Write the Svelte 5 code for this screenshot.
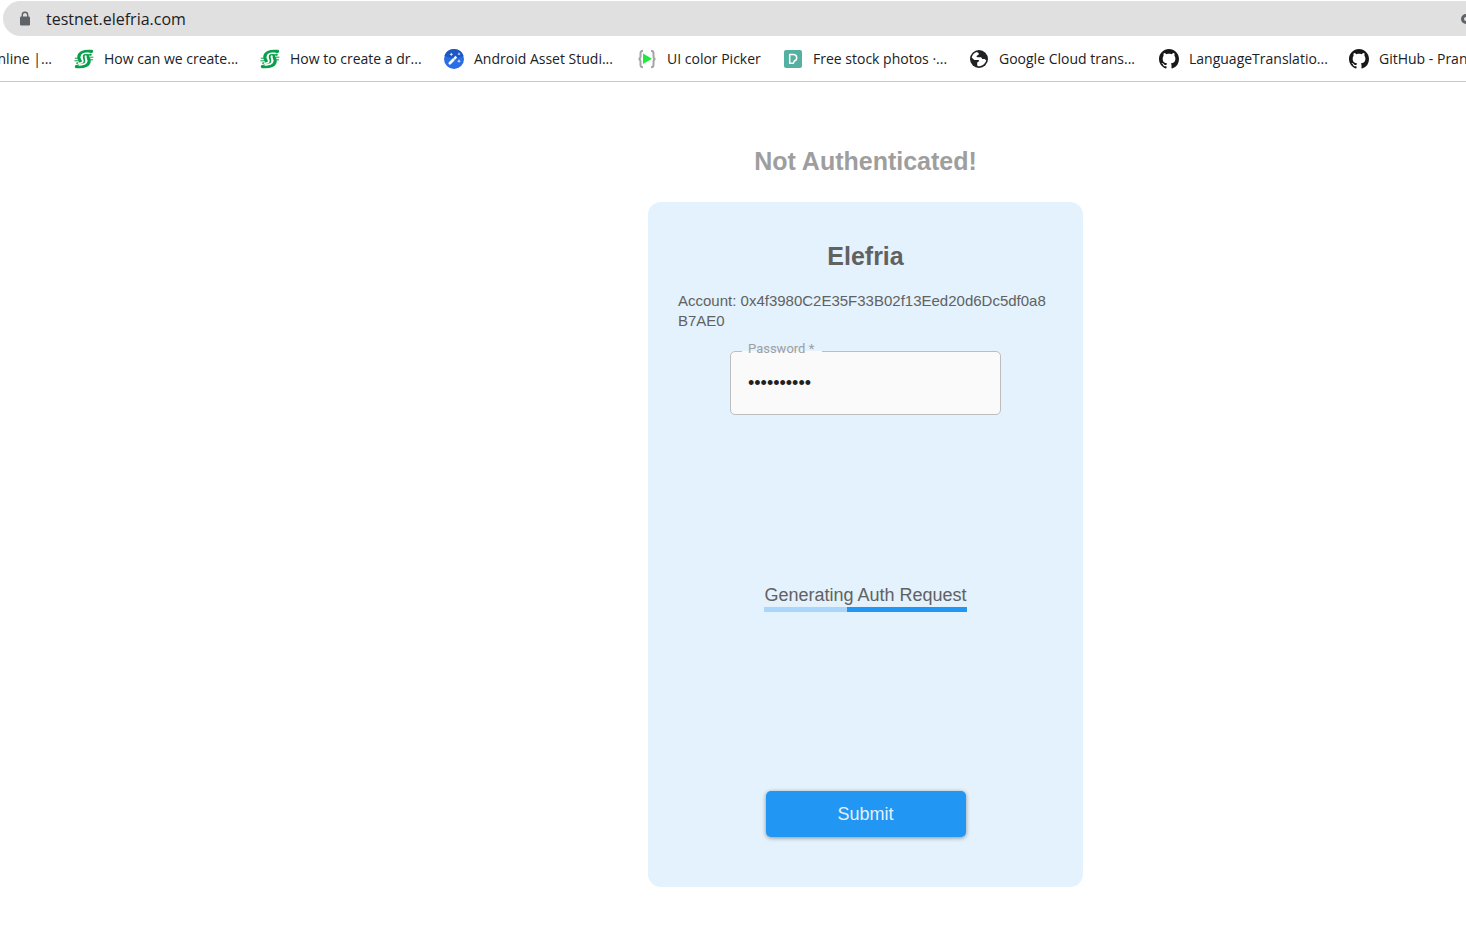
<script>
  let password = $state('elefria123');

  const bookmarks = [
    { icon: 'sf', label: 'How can we create...' },
    { icon: 'sf', label: 'How to create a dr...' },
    { icon: 'wand', label: 'Android Asset Studi...' },
    { icon: 'play', label: 'UI color Picker' },
    { icon: 'pexels', label: 'Free stock photos ·...' },
    { icon: 'globe', label: 'Google Cloud trans...' },
    { icon: 'github', label: 'LanguageTranslatio...' },
    { icon: 'github', label: 'GitHub - Pran' },
  ];
</script>

{#snippet favicon(name)}
  <svg class="favicon" viewBox="0 0 20 20" aria-hidden="true">
    {#if name === 'sf'}
      <g fill="none" stroke="#0aa04b" stroke-linecap="round" stroke-linejoin="round">
        <path stroke-width="3.2" d="M17.6 2.4 C9.5 1.6 4.8 3.8 4.8 8.2 C4.8 11.2 7.2 11 6.4 13.4" />
        <path stroke-width="3.2" d="M2.4 17.6 C10.5 18.4 15.2 16.2 15.2 11.8 C15.2 8.8 12.8 9 13.6 6.6" />
        <path stroke-width="2" d="M16.8 5.8 C12 4.8 9.6 5.4 9.6 7.4 C9.6 9.4 10.6 10.6 10.4 12.6 C10.2 14.6 8 15.2 3.2 14.2" />
        <path stroke-width="1" d="M1.2 9.2 H4 M0.8 11.8 H5 M19 8.2 H15 M18.6 10.8 H15" />
      </g>
      <path fill="none" stroke="#fff" stroke-width="1.5" stroke-linecap="round" d="M15.2 4.4 C10.2 3.6 7.7 4.8 7.7 7.4 C7.7 9.4 8.9 10.2 8.7 12.4 C8.5 14.4 6.8 14.4 4.4 14.2 M12 7.2 C11.2 8.8 12.8 10 12.4 12.4 C12 14.8 10 15.8 5.4 15.9" />
    {:else if name === 'wand'}
      <circle cx="10" cy="10" r="10" fill="#2a6de5" />
      <path fill="#1c57c4" d="M0.5 7 A10 10 0 0 1 19.5 7 L11 10Z" />
      <path stroke="#fff" stroke-width="2.7" stroke-linecap="round" d="M5.8 14.2 L9.3 10.7" />
      <path stroke="#fff" stroke-width="2.5" d="M10.2 9.8 L12.3 7.7" />
      <path fill="#dce9ff" d="M7.3 3.4 l.6 1.3 1.3.6 -1.3.6 -.6 1.3 -.6-1.3 -1.3-.6 1.3-.6z M15 3.2 l.5 1.2 1.2.5 -1.2.5 -.5 1.2 -.5-1.2 -1.2-.5 1.2-.5z M15 10.3 l.6 1.3 1.3.6 -1.3.6 -.6 1.3 -.6-1.3 -1.3-.6 1.3-.6z" />
    {:else if name === 'play'}
      <path fill="none" stroke="#a5a5a5" stroke-width="2" d="M6 1.7 C3.8 1.7 3.5 2.6 3.5 4.2 V7.3 C3.5 9 3 9.7 1.7 10 C3 10.3 3.5 11 3.5 12.7 V15.8 C3.5 17.4 3.8 18.3 6 18.3 M14 1.7 C16.2 1.7 16.5 2.6 16.5 4.2 V7.3 C16.5 9 17 9.7 18.3 10 C17 10.3 16.5 11 16.5 12.7 V15.8 C16.5 17.4 16.2 18.3 14 18.3" />
      <path fill="#22e83c" d="M6 4.4 L15 9.7 L6 15Z" />
    {:else if name === 'pexels'}
      <rect x="1" y="1" width="18" height="18" rx="2" fill="#54b1a1" />
      <path fill="none" stroke="#fff" stroke-width="1.5" stroke-linejoin="round" d="M6.7 5.6 H10.4 C14.6 5.6 14.6 11.4 11.4 11.8 L10.4 14.3 H6.7Z" />
    {:else if name === 'globe'}
      <circle cx="10" cy="10" r="9" fill="#202124" />
      <path fill="#fff" d="M7.9 3 C5.2 3.8 3.3 5.8 2.7 8.6 L5.3 11 H9.2 C10.4 11 10.6 12.2 9.6 12.6 L8.2 13.6 V16.5 L9.2 17.3 C13.3 17.4 16.6 14.5 17.2 11.2 L15.6 10 H13.2 L12.2 8.2 H8.6 C7.4 8.2 7.2 6.9 8.2 6.4 L9.6 5.8 L9.8 4.3Z" />
    {:else if name === 'github'}
      <path fill="#181818" transform="scale(1.25)" d="M8 0C3.58 0 0 3.58 0 8c0 3.54 2.29 6.53 5.47 7.59.4.07.55-.17.55-.38 0-.19-.01-.82-.01-1.49-2.01.37-2.53-.49-2.69-.94-.09-.23-.48-.94-.82-1.13-.28-.15-.68-.52-.01-.53.63-.01 1.08.58 1.23.82.72 1.21 1.87.87 2.33.66.07-.52.28-.87.51-1.07-1.78-.2-3.64-.89-3.64-3.95 0-.87.31-1.59.82-2.15-.08-.2-.36-1.02.08-2.12 0 0 .67-.21 2.2.82.64-.18 1.32-.27 2-.27s1.36.09 2 .27c1.53-1.04 2.2-.82 2.2-.82.44 1.1.16 1.92.08 2.12.51.56.82 1.27.82 2.15 0 3.07-1.87 3.75-3.65 3.95.29.25.54.73.54 1.48 0 1.07-.01 1.93-.01 2.2 0 .21.15.46.55.38A8.01 8.01 0 0 0 16 8c0-4.42-3.58-8-8-8Z" />
    {/if}
  </svg>
{/snippet}

<header class="browser">
  <div class="address-bar">
    <svg class="lock" viewBox="0 0 12 16" aria-hidden="true">
      <rect x="1" y="5.5" width="10" height="9" rx="1.2" fill="#5f6368" />
      <path d="M3.3 6 V4 a2.7 2.7 0 0 1 5.4 0 V6" fill="none" stroke="#5f6368" stroke-width="1.4" />
    </svg>
    <span class="url">testnet.elefria.com</span>
    <svg class="key" viewBox="0 0 5 12" aria-hidden="true">
      <circle cx="5" cy="6" r="3.5" fill="none" stroke="#5f6368" stroke-width="3" />
    </svg>
  </div>
  <nav class="bookmarks" aria-label="Bookmarks">
    <a class="bookmark first" href="#online">online |...</a>
    {#each bookmarks as bookmark}
      <a class="bookmark" href="#bookmark">
        {@render favicon(bookmark.icon)}
        <span>{bookmark.label}</span>
      </a>
    {/each}
  </nav>
</header>

<main>
  <h1>Not Authenticated!</h1>
  <form class="card" onsubmit={(event) => event.preventDefault()}>
    <h2>Elefria</h2>
    <p class="account">Account: 0x4f3980C2E35F33B02f13Eed20d6Dc5df0a8B7AE0</p>
    <div class="field">
      <input id="password" type="password" autocomplete="off" required bind:value={password} />
      <label for="password">Password *</label>
    </div>
    <div class="status">
      <span id="status-text">Generating Auth Request</span>
      <div class="progress" role="progressbar" aria-labelledby="status-text"><div class="bar"></div></div>
    </div>
    <button type="submit">Submit</button>
  </form>
</main>

<style>
  :global(body) {
    margin: 0;
    background: #fff;
    font-family: "Liberation Sans", Arial, sans-serif;
    overflow-x: hidden;
  }

  .browser {
    padding-top: 1px;
    border-bottom: 1px solid #c8cacc;
    font-family: "Open Sans", "Segoe UI", sans-serif;
    color: #202124;
    overflow: hidden;
  }

  .address-bar {
    display: flex;
    align-items: center;
    height: 35px;
    margin-left: 3px;
    padding-left: 16px;
    border-radius: 18px 0 0 18px;
    background: #e0e0e0;
  }

  .lock {
    width: 12px;
    height: 16px;
    margin-right: 15px;
  }

  .url {
    font-size: 16px;
    line-height: 24px;
  }

  .key {
    width: 5px;
    height: 12px;
    margin-left: auto;
  }

  .bookmarks {
    display: grid;
    grid-template-columns: 74px 186px 184px 193px 146px 186px 190px 190px 190px;
    height: 45px;
  }

  .bookmark {
    display: flex;
    align-items: center;
    gap: 10px;
    color: inherit;
    font-size: 14px;
    line-height: 20px;
    text-decoration: none;
    white-space: nowrap;
  }

  .first {
    justify-content: flex-end;
    padding-right: 22px;
  }

  .favicon {
    flex: none;
    width: 20px;
    height: 20px;
  }

  main {
    display: flex;
    flex-direction: column;
    align-items: center;
    padding: 64px 0 64px 265px;
  }

  h1,
  h2 {
    margin: 0;
    font-size: 25px;
    line-height: 30px;
  }

  h1 {
    margin-bottom: 26px;
    color: #9e9e9e;
  }

  h2 {
    color: #616161;
  }

  .card {
    display: flex;
    flex-direction: column;
    align-items: center;
    box-sizing: border-box;
    width: 435px;
    max-width: 100%;
    padding: 39px 30px 50px;
    border-radius: 13px;
    background: #e3f2fd;
  }

  .account {
    align-self: stretch;
    margin: 20px 0;
    color: #616161;
    font-size: 15px;
    line-height: 20px;
    overflow-wrap: anywhere;
    word-break: break-all;
  }

  .field {
    position: relative;
    width: 271px;
  }

  input {
    display: block;
    box-sizing: border-box;
    width: 100%;
    height: 64px;
    padding: 0 17px;
    border: 1px solid #bdbdbd;
    border-radius: 5px;
    outline: none;
    background: #fafafa;
    color: #212121;
    font: 18px "Liberation Sans", Arial, sans-serif;
  }

  label {
    position: absolute;
    top: -10px;
    left: 12px;
    box-sizing: border-box;
    width: 80px;
    padding-left: 6px;
    background: linear-gradient(#fafafa, #fafafa) 0 10px / 100% 1px no-repeat;
    color: #9e9e9e;
    font: 13px/16px Roboto, sans-serif;
  }

  .status {
    margin: 168px 0 179px;
    color: #616161;
    font-size: 18px;
    line-height: 24px;
  }

  .progress {
    height: 5px;
    background: #a9d6fa;
  }

  .bar {
    width: 59%;
    height: 100%;
    margin-left: auto;
    background: #2196f3;
  }

  button {
    width: 200px;
    height: 46px;
    border: 0;
    border-radius: 5px;
    background: #2196f3;
    box-shadow: 0 1px 4px rgb(0 0 0 / 40%);
    color: #e3f2fd;
    font: 18px "Liberation Sans", Arial, sans-serif;
  }
</style>
